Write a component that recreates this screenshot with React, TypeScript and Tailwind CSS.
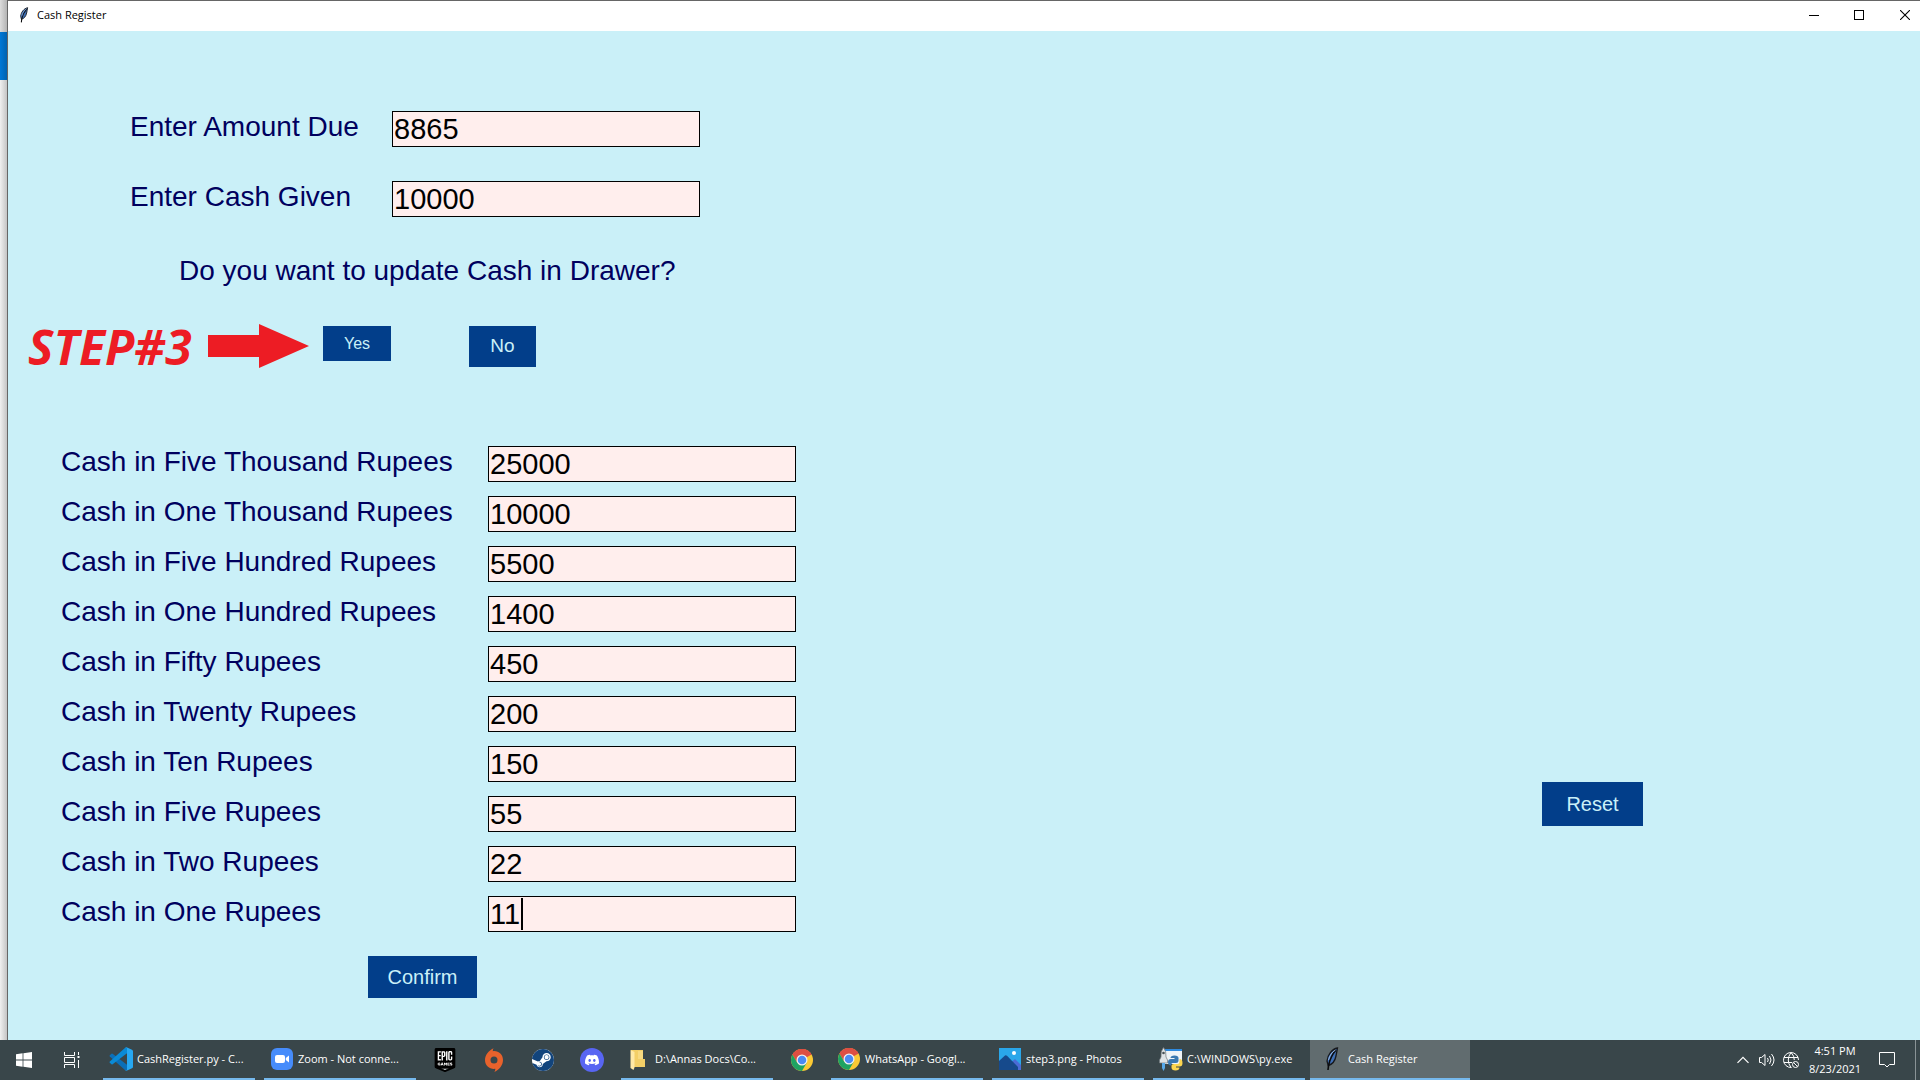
import { useState } from "react";
import type { ReactNode } from "react";
import { SiDiscord, SiEpicgames, SiSteam } from "react-icons/si";

const drawer = [
  ["Cash in Five Thousand Rupees", "25000"],
  ["Cash in One Thousand Rupees", "10000"],
  ["Cash in Five Hundred Rupees", "5500"],
  ["Cash in One Hundred Rupees", "1400"],
  ["Cash in Fifty Rupees", "450"],
  ["Cash in Twenty Rupees", "200"],
  ["Cash in Ten Rupees", "150"],
  ["Cash in Five Rupees", "55"],
  ["Cash in Two Rupees", "22"],
  ["Cash in One Rupees", "11"],
];

function Feather({ className }: { className: string }) {
  return (
    <svg viewBox="0 0 16 24" className={className} aria-hidden="true">
      <path d="M13.500 1C8 2 3.500 8 3 14l1.200 4.500C8 17.500 11 14 12 9c.5-3 1-5 1.500-8z" fill="#3f6fb5" stroke="#16181c" strokeWidth="1.300" />
      <path d="M12 3C8.500 7 6 12 4.600 18L4 23" fill="none" stroke="#0b0c0e" strokeWidth="1.600" />
      <path d="M11.500 3C8 5 5.500 8.500 4.500 13" fill="none" stroke="#9dbce6" strokeWidth="0.900" />
    </svg>
  );
}

function Chrome() {
  return (
    <svg viewBox="0 0 48 48" className="size-6" aria-hidden="true">
      <circle cx="24" cy="24" r="22" fill="#fbc934" />
      <path d="M24 24 4.950 13A22 22 0 0 1 43.050 13z" fill="#dd4f43" />
      <path d="M24 13H43.050A22 22 0 0 0 4.950 13L14.500 29.500z" fill="#dd4f43" />
      <path d="M4.950 13A22 22 0 0 0 24 46L33.500 29.500 24 24 14.500 29.500z" fill="#1ea362" />
      <circle cx="24" cy="24" r="11" fill="#f1f1f1" />
      <circle cx="24" cy="24" r="8.500" fill="#4a8af4" />
    </svg>
  );
}

function VsCode() {
  return (
    <svg viewBox="0 0 24 24" className="size-6" aria-hidden="true">
      <path d="M0.800 8.200 2.500 6.700Q3 6.400 3.600 6.800L18 17.800V23.600Q17 24 16.200 23.300L.8 9.400Q.2 8.800.8 8.200z" fill="#0b6fb8" />
      <path d="M.8 15.800 2.500 17.300Q3 17.600 3.600 17.200L18 6.200V.4Q17 0 16.200.7L.8 14.600Q.2 15.200.8 15.800z" fill="#0a8ad6" />
      <path d="M17.500.2 23 2.800Q24 3.300 24 4.300V19.700Q24 20.700 23 21.200L17.500 23.800Q16.500 24 16 23.200 18 24 18 22.500V1.500Q18 0 16 .8 16.500 0 17.500.2z" fill="#27a8f2" />
    </svg>
  );
}

function ZoomLogo() {
  return (
    <svg viewBox="0 0 24 24" className="size-6" aria-hidden="true">
      <rect x="1" y="1" width="22" height="22" rx="6" fill="#468cfb" />
      <rect x="5" y="8" width="10" height="8" rx="2" fill="#fff" />
      <path d="M15.800 11 19 8.500V15.500L15.800 13z" fill="#fff" />
    </svg>
  );
}

function Folder() {
  return (
    <svg viewBox="0 0 24 24" className="size-6" aria-hidden="true">
      <path d="M4 3H16V12H18V20H4z" fill="#f3cf67" />
      <path d="M11 4H16V12H11z" fill="#f8da80" />
      <path d="M3.500 3 7.500 5V20.500L6.500 23 3.500 21z" fill="#ffe9a6" />
    </svg>
  );
}

function Photos() {
  return (
    <svg viewBox="0 0 24 24" className="size-6" aria-hidden="true">
      <rect x="1" y="1" width="22" height="22" fill="#2aa7ea" />
      <path d="M11 17 17 12 23 18V23H11z" fill="#4a6bd6" />
      <path d="M1 14 7 8.500Q8 8 9 8.800L20 20V23H1z" fill="#164a8c" />
      <circle cx="16" cy="6" r="2" fill="#fff" />
    </svg>
  );
}

function PyLauncher() {
  return (
    <svg viewBox="0 0 24 24" className="size-6" aria-hidden="true">
      <rect x="5" y="2" width="18" height="15" fill="#eef3f7" />
      <rect x="5" y="2" width="18" height="2" fill="#2f8ade" />
      <path d="M11.500 11Q11.500 8.500 15.500 8.500 19.500 8.500 19.500 11V14Q19.500 16 17 16H13.500Q12 16 12 18.500 9 18.500 9 15 9 12 12 12H15.500V11z" fill="#3a78b0" />
      <path d="M20.500 12Q23.500 12 23.500 16 23.500 19.500 20.500 19.500H17V20.500H20.500Q20.500 23.500 16.500 23.500 12.500 23.500 12.500 20.500V18.500Q12.500 17 15 17H18.500Q20.500 17 20.500 14z" fill="#fbd550" />
      <path d="M4.500.5Q7.500 4 7 10L8.500 13V16H.5V13L2 10Q1.500 4 4.500.5z" fill="#dfe3e6" stroke="#6b7478" strokeWidth="0.700" />
      <circle cx="4.500" cy="6" r="1.300" fill="#4a5357" />
      <path d="M3 16H6V21L4.500 24 3 21z" fill="#57a9ea" />
    </svg>
  );
}

function Origin() {
  return (
    <svg viewBox="0 0 24 24" className="size-6" aria-hidden="true">
      <path
        fillRule="evenodd"
        d="M11.500.2C10.800 1.200 10.700 2.200 10.800 3.200 16 2.400 21 6 21 12c0 5-3.500 9.500-8.600 12 .8-1.200 1-2.200.9-3.200C8 21.500 3 18 3 12 3 7 6.500 2.600 11.500.2zM12 8.500A3.500 3.500 0 1 0 12 15.500 3.500 3.500 0 1 0 12 8.500z"
        fill="#e8622c"
      />
    </svg>
  );
}

function Task({ icon, label, active }: { icon: ReactNode; label: string; active?: boolean }) {
  return (
    <button
      className={
        active
          ? "flex h-10 w-40 items-stretch border-b-2 border-[#76b9ed] bg-[#616c6f]"
          : "flex h-10 w-40 items-stretch px-1"
      }
    >
      <span
        className={
          active
            ? "flex min-w-0 flex-1 items-center gap-1 pl-[10px]"
            : "flex min-w-0 flex-1 items-center gap-1 border-b-2 border-[#76b9ed] pl-[6px]"
        }
      >
        {icon}
        <span className="whitespace-nowrap">{label}</span>
      </span>
    </button>
  );
}

function Pinned({ label, children }: { label: string; children: ReactNode }) {
  return (
    <button aria-label={label} className="flex h-10 w-12 items-center justify-center">
      {children}
    </button>
  );
}

function Field({ id, label, value, labelWidth, caret }: { id: string; label: string; value: string; labelWidth: string; caret?: boolean }) {
  const [text, setText] = useState(value);
  return (
    <div className="flex items-start">
      <label htmlFor={id} className={`${labelWidth} shrink-0 whitespace-nowrap leading-8 text-[#00005e]`}>
        {label}
      </label>
      <div className="relative">
        <input
          id={id}
          value={text}
          onChange={(e) => setText(e.target.value)}
          className="block h-9 w-[308px] border border-black bg-[#ffeeed] px-px text-[29px] leading-8 text-black outline-none"
        />
        {caret && <span className="absolute top-[2px] left-[33px] h-8 w-[2px] bg-black" />}
      </div>
    </div>
  );
}

export default function App() {
  return (
    <div className="flex min-h-screen flex-col bg-[#f0f0f0] font-['Liberation_Sans',Arial,sans-serif]">
      <div className="flex flex-1">
        <div className="flex w-[7px] shrink-0 flex-col bg-linear-to-r from-[#f0f0f0] to-[#c4c4c4]">
          <div className="h-8 bg-linear-to-r from-[#dcdcdc] to-[#b4b4b4]" />
          <div className="h-12 bg-linear-to-r from-[#0078d7] to-[#0063b1]" />
        </div>
        <div className="flex min-w-0 flex-1 flex-col border-t border-l border-[#666] bg-[#caf0f8]">
          <header className="flex h-[30px] items-center bg-white pb-[2px] pl-2 font-['Open_Sans','Noto_Sans',sans-serif] text-[11px] text-black">
            <Feather className="h-4 w-4" />
            <h1 className="ml-[5px] flex-1 leading-4">Cash Register</h1>
            <button aria-label="Minimize" className="flex h-full w-[45px] items-center justify-center">
              <span className="h-px w-[10px] bg-black" />
            </button>
            <button aria-label="Maximize" className="flex h-full w-[45px] items-center justify-center">
              <span className="size-[10px] border border-black" />
            </button>
            <button aria-label="Close" className="flex h-full w-[39px] items-center justify-center pl-2">
              <svg viewBox="0 0 10 10" className="size-[10px]" stroke="#000" strokeWidth="1.100" aria-hidden="true">
                <path d="M0 0 10 10M10 0 0 10" />
              </svg>
            </button>
          </header>

          <main className="flex flex-1 items-start justify-between text-[28px]">
            <form className="flex flex-col pt-20 pb-[42px]" onSubmit={(e) => e.preventDefault()}>
              <div className="flex flex-col gap-[34px] pl-[122px]">
                <Field id="due" label="Enter Amount Due" value="8865" labelWidth="w-[262px]" />
                <Field id="given" label="Enter Cash Given" value="10000" labelWidth="w-[262px]" />
              </div>
              <p className="mt-[38px] pl-[171px] leading-8 text-[#00005e]">Do you want to update Cash in Drawer?</p>
              <div className="mt-[37px] flex h-11 items-start pl-5">
                <strong className="w-[180px] font-['Open_Sans','Noto_Sans',sans-serif] text-[48px] leading-[46px] font-bold whitespace-nowrap text-[#ed1c24] italic">
                  STEP#3
                </strong>
                <svg viewBox="0 0 101 44" className="h-11 w-[101px]" aria-hidden="true">
                  <path d="M0 11H51V0L101 22 51 44V33H0z" fill="#ed1c24" />
                </svg>
                <button className="mt-[2px] ml-[14px] h-[35px] w-[68px] bg-[#023e8a] text-base text-[#caf0f8]">Yes</button>
                <button className="mt-[2px] ml-[78px] h-[41px] w-[67px] bg-[#023e8a] text-[19px] text-[#caf0f8]">No</button>
              </div>
              <div className="mt-[78px] flex flex-col gap-[14px] pl-[53px]">
                {drawer.map(([label, value], i) => (
                  <Field key={label} id={`drawer-${i}`} label={label} value={value} labelWidth="w-[427px]" caret={i === drawer.length - 1} />
                ))}
              </div>
              <button className="mt-6 ml-[360px] h-[42px] w-[109px] bg-[#023e8a] text-xl text-[#caf0f8]">Confirm</button>
            </form>
            <button className="mr-[277px] mb-[214px] h-11 w-[101px] self-end bg-[#023e8a] text-xl text-[#caf0f8]">Reset</button>
          </main>
        </div>
      </div>

      <footer className="flex h-10 items-center bg-[#39464a] font-['Open_Sans','Noto_Sans',sans-serif] text-[11px] text-white">
        <nav className="flex gap-px">
          <div className="flex pr-[2px]">
            <Pinned label="Start">
              <svg viewBox="0 0 16 16" className="size-4" fill="#fff" aria-hidden="true">
                <path d="M0 2.200 6.600 1.300V7.600H0zM7.400 1.200 16 0V7.600H7.400zM0 8.400H6.600V14.700L0 13.800zM7.400 8.400H16V16L7.400 14.800z" />
              </svg>
            </Pinned>
            <Pinned label="Task View">
              <svg viewBox="0 0 16 16" className="size-4" fill="none" stroke="#fff" aria-hidden="true">
                <path d="M.5 0V3.500H10.500V0M.5 16V12.500H10.500V16M.5 5.500H10.500V10.500H.5zM14.500 0V3M14.500 8V16" />
                <path d="M13.500 5H15.500" strokeWidth="2" />
              </svg>
            </Pinned>
          </div>
          <Task icon={<VsCode />} label="CashRegister.py - C..." />
          <Task icon={<ZoomLogo />} label="Zoom - Not conne..." />
          <Pinned label="Epic Games">
            <span className="flex size-6 items-center justify-center">
              <svg viewBox="0 0 24 24" className="size-6" aria-hidden="true">
                <path d="M4 2H20V18L12 22 4 18z" fill="#fff" />
                <SiEpicgames size={24} color="#000" />
              </svg>
            </span>
          </Pinned>
          <Pinned label="Origin">
            <Origin />
          </Pinned>
          <Pinned label="Steam">
            <span className="flex size-[22px] items-center justify-center rounded-full bg-white">
              <SiSteam size={22} color="#12447c" />
            </span>
          </Pinned>
          <Pinned label="Discord">
            <span className="flex size-6 items-center justify-center rounded-full bg-[#5865f2]">
              <SiDiscord size={14} color="#fff" />
            </span>
          </Pinned>
          <Task icon={<Folder />} label="D:\Annas Docs\Co..." />
          <Pinned label="Chrome">
            <Chrome />
          </Pinned>
          <Task icon={<Chrome />} label="WhatsApp - Googl..." />
          <Task icon={<Photos />} label="step3.png - Photos" />
          <Task icon={<PyLauncher />} label="C:\WINDOWS\py.exe" />
          <Task active icon={<Feather className="size-6" />} label="Cash Register" />
        </nav>
        <div className="ml-auto flex h-full items-center">
          <button aria-label="Show hidden icons" className="mr-[10px]">
            <svg viewBox="0 0 12 8" className="h-2 w-3" fill="none" stroke="#fff" strokeWidth="1.200" aria-hidden="true">
              <path d="M.5 6.800 6 1.300 11.500 6.800" />
            </svg>
          </button>
          <button aria-label="Volume" className="mr-2">
            <svg viewBox="0 0 16 16" className="size-4" fill="none" stroke="#fff" aria-hidden="true">
              <path d="M.5 5.500H2.500L6 2.500V13.500L2.500 10.500H.5zM8.500 6Q10 8 8.500 10M10.500 4Q13.500 8 10.500 12M12.500 2Q17.500 8 12.500 14" />
            </svg>
          </button>
          <button aria-label="Network" className="mr-[10px]">
            <svg viewBox="0 0 16 16" className="size-4" fill="none" stroke="#fff" aria-hidden="true">
              <path d="M8.500 15.500A7.500 7.500 0 1 1 15.500 8M1 5.500H15M1 10.500H9M8 .5Q2.500 8 8 15.500M8 .5Q11.500 4 11.300 8" />
              <circle cx="12.500" cy="12.500" r="3" />
              <path d="M10.500 10.500 14.500 14.500" />
            </svg>
          </button>
          <div className="mr-[18px] w-[52px] text-center leading-[18px] whitespace-nowrap">
            <div>4:51 PM</div>
            <div>8/23/2021</div>
          </div>
          <button aria-label="Notifications" className="mr-5">
            <svg viewBox="0 0 16 16" className="size-4" fill="none" stroke="#fff" aria-hidden="true">
              <path d="M.5.5H15.500V12.500H10.500L8 15 5.500 12.500H.5z" />
            </svg>
          </button>
          <button aria-label="Show desktop" className="h-full w-[5px] border-l border-[#8a9396]" />
        </div>
      </footer>
    </div>
  );
}
